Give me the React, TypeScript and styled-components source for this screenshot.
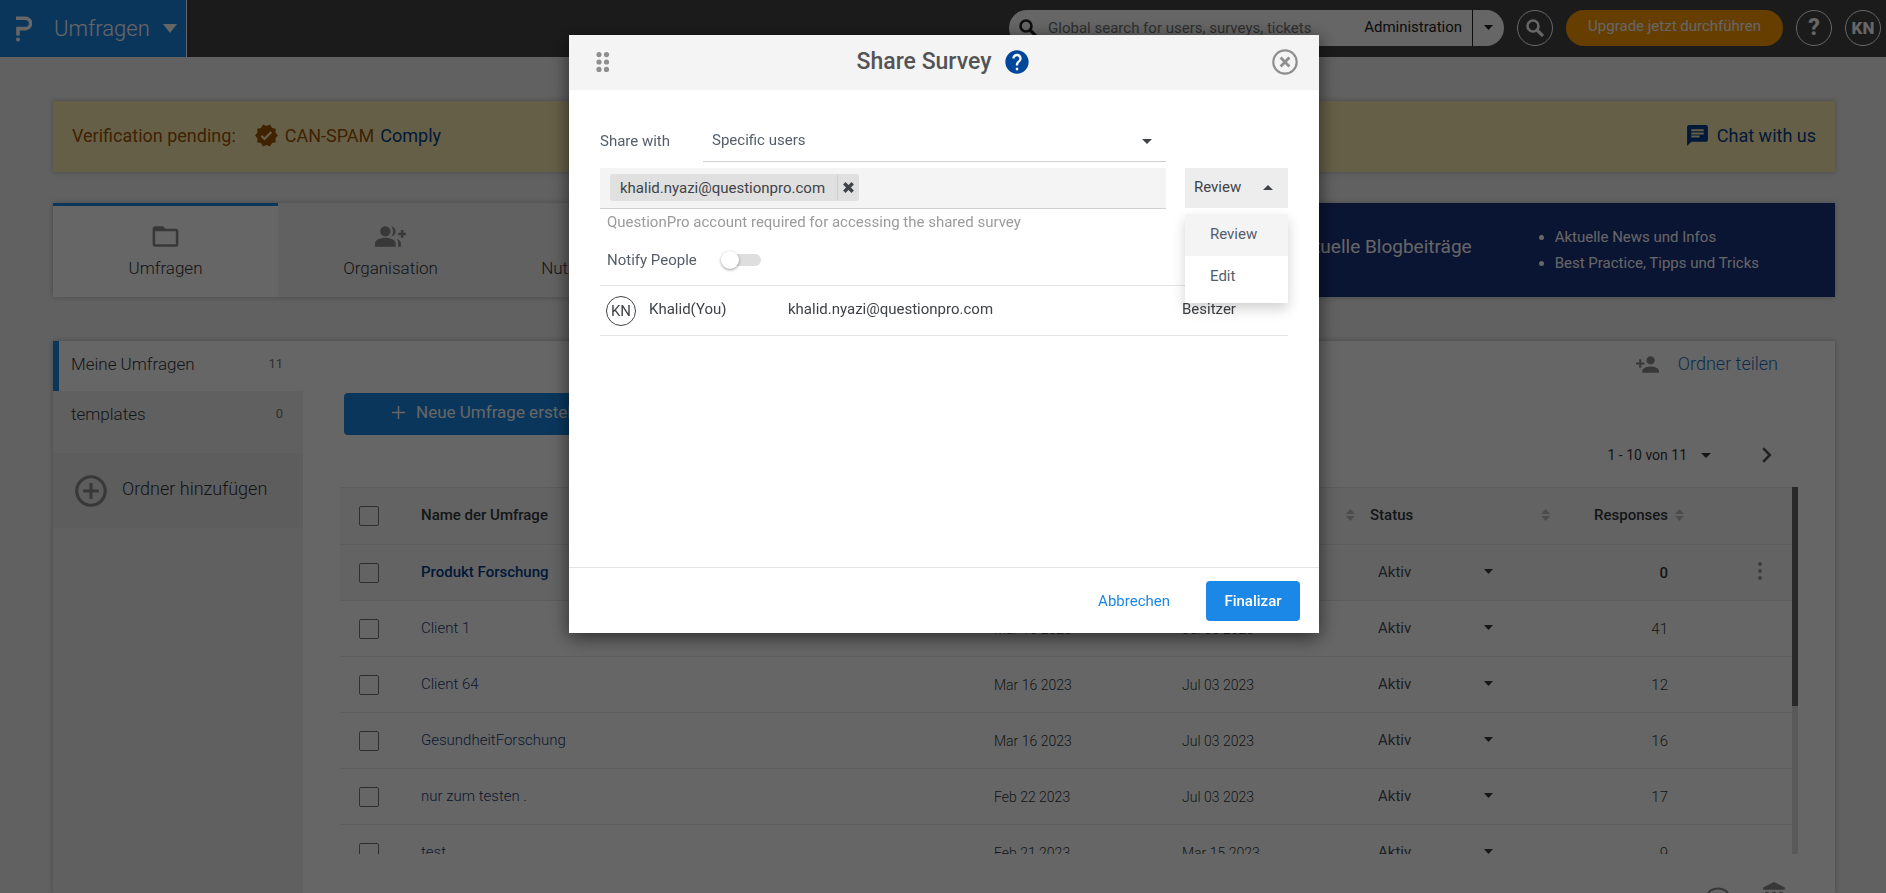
import React, { useState } from "react";
import styled, { createGlobalStyle } from "styled-components";
import {
  MdAccountBalance,
  MdAddCircleOutline,
  MdChat,
  MdFolderOpen,
  MdGroupAdd,
  MdHelp,
  MdPersonAdd,
  MdVerified,
} from "react-icons/md";

const FONT = '"Roboto", "Liberation Sans", sans-serif';

const GlobalStyle = createGlobalStyle`
  *, *::before, *::after { box-sizing: border-box; }
  html, body { height: 100%; }
  body {
    margin: 0;
    overflow: hidden;
    background: #f3f3f3;
    color: #33373c;
    font-family: ${FONT};
    font-size: 15px;
    line-height: 20px;
  }
  button, input, select { font: inherit; color: inherit; }
  button { padding: 0; border: 0; background: none; cursor: pointer; }
  a { text-decoration: none; }
  svg { display: block; flex: none; }
`;

/* ---------- page frame ---------- */

const Page = styled.div`
  display: flex;
  flex-direction: column;
  height: 100vh;
  overflow: hidden;
`;

const TopBar = styled.header`
  display: flex;
  flex: none;
  align-items: stretch;
  justify-content: space-between;
  height: 57px;
  background: #454545;
`;

const Brand = styled.button`
  display: flex;
  align-items: center;
  gap: 22px;
  padding: 0 9px 0 16px;
  border-right: 1px solid #fff;
  background: #1b87e6;
  color: #fff;
  font-size: 22px;
  font-weight: 300;
  line-height: 28px;
`;

const BrandName = styled.span`
  display: flex;
  align-items: center;
  gap: 13px;
`;

const TopTools = styled.div`
  display: flex;
  align-items: center;
  gap: 13px;
  padding: 0 5px 2px 0;
`;

const SearchPill = styled.form`
  display: flex;
  align-items: center;
  width: 495px;
  height: 36px;
  padding-left: 10px;
  border-radius: 18px;
  background: #fff;
  color: #222;
`;

const SearchInput = styled.input`
  flex: 1;
  min-width: 0;
  margin-left: 11px;
  padding: 0;
  border: 0;
  outline: 0;
  background: none;
  &::placeholder { color: #777; opacity: 1; }
`;

const ScopeButton = styled.button`
  padding: 0 10px 2px;
`;

const ScopeToggle = styled.button`
  display: flex;
  align-items: center;
  justify-content: center;
  align-self: stretch;
  width: 32px;
  border-left: 1px solid #222;
`;

const RoundButton = styled.button<{ $size?: number }>`
  display: flex;
  align-items: center;
  justify-content: center;
  width: 36px;
  height: 36px;
  border: 1px solid #fff;
  border-radius: 50%;
  color: #fff;
  font-size: ${(p) => p.$size ?? 18}px;
  font-weight: 800;
`;

const UpgradeButton = styled.button`
  height: 36px;
  padding: 0 22px 3px;
  border-radius: 18px;
  background: #ff9b00;
  color: #fff;
`;

const Content = styled.main`
  display: flex;
  flex: 1;
  flex-direction: column;
  min-height: 0;
  padding: 44px 51px 0 53px;
`;

/* ---------- notice ---------- */

const raised = "box-shadow: 0 0 6px rgba(0, 0, 0, 0.25);";

const Notice = styled.section`
  display: flex;
  flex: none;
  align-items: center;
  height: 71px;
  padding: 0 19px 2px;
  ${raised}
  background: #feeeb4;
  color: #a05400;
  font-size: 18px;
  line-height: 24px;
`;

const NoticeItem = styled.span`
  display: flex;
  align-items: center;
  gap: 6px;
  margin-left: 18px;
`;

const NoticeLink = styled.a`
  display: flex;
  align-items: center;
  gap: 7px;
  color: #00408f;
`;

const ChatLink = styled(NoticeLink)`
  margin-left: auto;
`;

/* ---------- tabs ---------- */

const TabStrip = styled.nav`
  display: flex;
  flex: none;
  height: 94px;
  margin-top: 31px;
  ${raised}
  background: #f3f3f3;
`;

const Tab = styled.a<{ $active?: boolean }>`
  display: flex;
  flex-direction: column;
  align-items: center;
  width: 225px;
  padding-top: 15px;
  border-top: ${(p) => (p.$active ? "3px solid #1b87e6" : "3px solid transparent")};
  background: ${(p) => (p.$active ? "#fff" : "transparent")};
  color: #8c8c8c;
  font-size: 17px;
  font-weight: 300;
  line-height: 24px;
`;

const TabLabel = styled.span`
  margin-top: 4px;
  color: #2f353c;
`;

const BlogCard = styled.aside`
  display: flex;
  flex: 1;
  align-items: center;
  justify-content: flex-end;
  gap: 62px;
  padding-right: 76px;
  background: #1b3380;
  color: #fff;
`;

const BlogTitle = styled.h2`
  margin: 0;
  padding-bottom: 6px;
  font-size: 19px;
  font-weight: 400;
  line-height: 24px;
`;

const BlogList = styled.ul`
  margin: 0;
  padding: 0 0 0 21px;
  line-height: 26px;
`;

/* ---------- workspace ---------- */

const Workspace = styled.section`
  display: flex;
  flex: 1;
  min-height: 0;
  margin-top: 44px;
  ${raised}
  background: #fff;
`;

const Sidebar = styled.nav`
  width: 250px;
  background: #f1f1f1;
`;

const Folder = styled.a<{ $active?: boolean }>`
  display: flex;
  align-items: center;
  justify-content: space-between;
  height: 50px;
  padding: 0 20px 4px 12px;
  border-left: 6px solid ${(p) => (p.$active ? "#1b87e6" : "transparent")};
  background: ${(p) => (p.$active ? "#fff" : "transparent")};
  color: #2f353c;
  font-size: 17px;
  font-weight: 300;
`;

const FolderCount = styled.span`
  font-size: 13px;
  font-weight: 400;
  color: #777;
`;

const AddFolder = styled.button`
  display: flex;
  align-items: center;
  gap: 12px;
  width: 100%;
  height: 75px;
  margin-top: 12px;
  padding: 0 0 0 19px;
  background: #e8e8e8;
  color: #8c8c8c;
  font-size: 18px;
  font-weight: 300;
`;

const AddFolderText = styled.span`
  padding-bottom: 3px;
  color: #2f353c;
`;

const Main = styled.div`
  flex: 1;
  min-width: 0;
  padding: 0 37px;
`;

const ShareRow = styled.div`
  display: flex;
  justify-content: flex-end;
  height: 52px;
  padding: 11px 20px 0 0;
`;

const ShareFolder = styled.button`
  display: flex;
  align-items: center;
  gap: 18px;
  height: 24px;
  color: #8c8c8c;
  font-size: 18px;
  font-weight: 300;
`;

const ShareFolderText = styled.span`
  color: #1b6fc2;
`;

const PrimaryButton = styled.button<{ $wide?: boolean }>`
  display: flex;
  align-items: center;
  justify-content: center;
  gap: 11px;
  height: ${(p) => (p.$wide ? 42 : 40)}px;
  width: ${(p) => (p.$wide ? "298px" : "94px")};
  margin-left: ${(p) => (p.$wide ? 4 : 0)}px;
  padding-bottom: ${(p) => (p.$wide ? 4 : 0)}px;
  border-radius: 4px;
  background: #1b87e6;
  color: #fff;
  font-size: ${(p) => (p.$wide ? 17 : 15)}px;
  font-weight: ${(p) => (p.$wide ? 400 : 500)};
`;

const Pager = styled.div`
  display: flex;
  align-items: center;
  justify-content: flex-end;
  height: 52px;
  padding: 0 26px 12px 0;
`;

const PagerRange = styled.button`
  display: flex;
  align-items: center;
  gap: 14px;
  margin-right: 51px;
  font-size: 14px;
`;

/* ---------- table ---------- */

const TableFrame = styled.div`
  display: flex;
  height: 367px;
`;

const TableClip = styled.div`
  flex: 1;
  overflow: hidden;
`;

const ScrollTrack = styled.div`
  width: 6px;
  background: #dedede;
`;

const ScrollThumb = styled.div`
  height: 219px;
  background: #666;
`;

const Table = styled.table`
  width: 100%;
  table-layout: fixed;
  border-collapse: collapse;
`;

const Col = styled.col<{ $w?: number }>`
  width: ${(p) => (p.$w ? `${p.$w}px` : "auto")};
`;

const Row = styled.tr<{ $tinted?: boolean }>`
  height: 56px;
  border-top: 1px solid #e6e6e6;
  background: ${(p) => (p.$tinted ? "#f8f8f8" : "transparent")};
`;

const HeadRow = styled(Row)`
  height: 57px;
`;

const Th = styled.th`
  padding: 0;
  font-weight: 500;
  text-align: left;
`;

const ThInner = styled.div<{ $end?: boolean }>`
  display: flex;
  align-items: center;
  justify-content: ${(p) => (p.$end ? "flex-end" : "space-between")};
  gap: 7px;
  padding-right: ${(p) => (p.$end ? 6 : 15)}px;
  padding-bottom: 2px;
`;

const Td = styled.td<{ $bold?: boolean }>`
  padding: 0;
  color: #33373c;
  font-size: 15px;
  font-weight: ${(p) => (p.$bold ? 500 : 300)};
`;

const LiftedTd = styled(Td)`
  padding-bottom: 2px;
`;

const DateTd = styled(Td)`
  font-size: 14px;
`;

const NumberTd = styled(Td)`
  padding-right: 22px;
  text-align: right;
`;

const SurveyLink = styled.a<{ $bold?: boolean }>`
  color: ${(p) => (p.$bold ? "#00408f" : "#1b3f7a")};
  font-weight: ${(p) => (p.$bold ? 500 : 300)};
`;

const Check = styled.input`
  display: block;
  appearance: none;
  width: 20px;
  height: 20px;
  margin: 0 0 0 19px;
  border: 1px solid #777;
  border-radius: 2px;
`;

const SelectBox = styled.div<{ $kind: "status" | "field" }>`
  display: grid;
  grid-template-columns: 1fr;
  align-items: center;
  width: ${(p) => (p.$kind === "status" ? "115px" : "auto")};
  margin-left: ${(p) => (p.$kind === "status" ? 8 : 0)}px;
  > * { grid-area: 1 / 1; }
  > svg { justify-self: end; pointer-events: none; margin-right: ${(p) => (p.$kind === "status" ? 0 : 14)}px; }
`;

const StatusSelect = styled.select`
  appearance: none;
  width: 100%;
  padding: 0;
  border: 0;
  background: none;
  color: #4a4f55;
  font-weight: 400;
`;

const MoreButton = styled.button`
  display: block;
  margin: 0 0 2px 68px;
  color: #999;
`;

const TableTools = styled.div`
  display: flex;
  justify-content: flex-end;
  gap: 32px;
  padding: 27px 11px 0 0;
  color: #8c8c8c;
`;

/* ---------- dialog ---------- */

const Overlay = styled.div`
  position: fixed;
  inset: 0;
  display: flex;
  align-items: flex-start;
  justify-content: center;
  padding: 35px 0 0 2px;
  background: rgba(0, 0, 0, 0.6);
`;

const Dialog = styled.section`
  display: flex;
  flex-direction: column;
  width: 750px;
  min-height: 598px;
  background: #fff;
  color: #3f4347;
  box-shadow: 0 4px 18px rgba(0, 0, 0, 0.6);
`;

const DialogHead = styled.header`
  display: grid;
  grid-template-columns: 1fr auto 1fr;
  align-items: center;
  height: 55px;
  padding: 0 21px 2px 27px;
  background: #f4f4f4;
`;

const DragHandle = styled.button`
  justify-self: start;
`;

const DialogTitle = styled.h1`
  display: flex;
  align-items: center;
  gap: 12px;
  margin: 0;
  padding-right: 6px;
  color: #545454;
  font-size: 23px;
  font-weight: 500;
  line-height: 28px;
`;

const HelpButton = styled.button`
  color: #00479b;
`;

const CloseButton = styled.button`
  justify-self: end;
`;

const DialogBody = styled.div`
  flex: 1;
  padding: 31px 31px 0;
`;

const FieldGrid = styled.div`
  display: grid;
  grid-template-columns: 103px 1fr 122px;
`;

const ShareLabel = styled.label`
  align-self: center;
  padding-bottom: 2px;
  color: #545e6b;
`;

const ShareSelect = styled.select`
  appearance: none;
  width: 100%;
  height: 41px;
  padding: 0 9px 3px;
  border: 0;
  border-bottom: 1px solid #cfcfcf;
  border-radius: 0;
  background: none;
  color: #545e6b;
`;

const PeopleRow = styled.div`
  display: flex;
  gap: 19px;
  margin-top: 6px;
`;

const PeopleBox = styled.div`
  display: flex;
  flex: 1;
  align-items: center;
  height: 41px;
  padding: 0 10px 1px;
  border-bottom: 1px solid #cfcfcf;
  background: #f4f4f4;
`;

const Chip = styled.span`
  display: flex;
  align-items: center;
  height: 27px;
  padding-left: 10px;
  border-radius: 3px;
  background: #e0e0e0;
`;

const ChipRemove = styled.button`
  display: flex;
  align-items: center;
  justify-content: center;
  width: 22px;
  height: 25px;
  margin-left: 12px;
  border-left: 1px solid #cdcdcd;
`;

const PeopleInput = styled.input`
  flex: 1;
  min-width: 0;
  border: 0;
  outline: 0;
  background: none;
`;

const RoleBox = styled.div`
  position: relative;
  width: 103px;
`;

const RoleButton = styled.button`
  display: flex;
  align-items: center;
  justify-content: space-between;
  width: 100%;
  height: 40px;
  padding: 0 15px 2px 9px;
  background: #ededed;
`;

const RoleMenu = styled.div`
  position: absolute;
  top: 46px;
  left: 0;
  width: 100%;
  padding-bottom: 5px;
  background: #fff;
  box-shadow: 0 6px 12px rgba(0, 0, 0, 0.18);
`;

const RoleOption = styled.button<{ $on: boolean }>`
  display: block;
  width: 100%;
  height: 42px;
  padding: 0 0 2px 25px;
  background: ${(p) => (p.$on ? "#f4f4f4" : "#fff")};
  color: #545e6b;
  text-align: left;
`;

const Hint = styled.p`
  margin: 3px 0 0;
  padding-left: 7px;
  color: #9b9b9b;
`;

const NotifyLabel = styled.label`
  display: inline-flex;
  align-items: center;
  gap: 24px;
  height: 20px;
  margin: 18px 0 15px 7px;
  color: #545e6b;
`;

const Toggle = styled.input`
  display: flex;
  align-items: center;
  appearance: none;
  width: 36px;
  height: 12px;
  margin: 0 0 0 4px;
  border-radius: 6px;
  background: #dedede;
  &::before {
    content: "";
    width: 18px;
    height: 18px;
    margin-left: ${(p) => (p.checked ? 18 : -4)}px;
    border-radius: 50%;
    background: #fff;
    box-shadow: 0 1px 3px rgba(0, 0, 0, 0.4);
  }
`;

const Member = styled.div`
  display: grid;
  grid-template-columns: 49px 139px 1fr 106px;
  align-items: center;
  height: 51px;
  border: 1px solid #e4e4e4;
  border-width: 1px 0;
`;

const MemberText = styled.span`
  padding-bottom: 4px;
`;

const Avatar = styled.span`
  display: flex;
  align-items: center;
  justify-content: center;
  width: 30px;
  height: 30px;
  margin-left: 6px;
  border: 1px solid #3f4347;
  border-radius: 50%;
`;

const DialogFoot = styled.footer`
  display: flex;
  align-items: center;
  justify-content: flex-end;
  gap: 36px;
  height: 66px;
  padding: 0 19px 0 0;
  border-top: 1px solid #e4e4e4;
`;

const TextButton = styled.button`
  color: #1b87e6;
`;

/* ---------- drawings ---------- */

const Caret = ({ up = false, w = 10, h = 5 }: { up?: boolean; w?: number; h?: number }) => (
  <svg width={w} height={h} viewBox="0 0 10 5" preserveAspectRatio="none" aria-hidden="true">
    <path d={up ? "M0 5 5 0l5 5z" : "M0 0h10L5 5z"} fill="currentColor" />
  </svg>
);

const Logo = () => (
  <svg width="16" height="26" viewBox="0 0 16 26" aria-hidden="true">
    <path d="M0 2.200h9.400a4.600 4.600 0 0 1 0 10.400H2v7" fill="none" stroke="#fff" strokeWidth="3.600" />
    <circle cx="2" cy="23.600" r="2" fill="#fff" />
  </svg>
);

const Magnifier = () => (
  <svg width="18" height="18" viewBox="0 0 18 18" fill="none" stroke="currentColor" aria-hidden="true">
    <circle cx="7" cy="7" r="5.500" strokeWidth="2.600" />
    <path d="m11 11 6 6" strokeWidth="3.200" />
  </svg>
);

const SortIcon = () => (
  <svg width="9" height="12" viewBox="0 0 9 12" fill="#bdbdbd" aria-hidden="true">
    <path d="M4.500 0 9 5H0zM0 7h9l-4.500 5z" />
  </svg>
);

const Dots = () => (
  <svg width="14" height="20" viewBox="0 0 14 20" fill="#8f8f8f" aria-hidden="true">
    {[2.6, 10, 17.4].map((y) => (
      <g key={y}>
        <circle cx="3" cy={y} r="2.600" />
        <circle cx="10.500" cy={y} r="2.600" />
      </g>
    ))}
  </svg>
);

const MoreIcon = () => (
  <svg width="4" height="18" viewBox="0 0 4 18" fill="currentColor" aria-hidden="true">
    <circle cx="2" cy="2" r="2" />
    <circle cx="2" cy="9" r="2" />
    <circle cx="2" cy="16" r="2" />
  </svg>
);

const CloseIcon = () => (
  <svg width="26" height="26" viewBox="0 0 26 26" fill="none" stroke="#8f8f8f" aria-hidden="true">
    <circle cx="13" cy="13" r="11.700" strokeWidth="2.200" />
    <path d="m8.600 8.600 8.800 8.800m0-8.800-8.800 8.800" strokeWidth="2.800" />
  </svg>
);

const RemoveIcon = () => (
  <svg width="11" height="11" viewBox="0 0 11 11" fill="none" stroke="#3f4347" strokeWidth="3.400" aria-hidden="true">
    <path d="m1.300 1.300 8.400 8.400m0-8.400-8.400 8.400" />
  </svg>
);

const PlusIcon = () => (
  <svg width="13" height="13" viewBox="0 0 13 13" stroke="currentColor" strokeWidth="1.500" aria-hidden="true">
    <path d="M6.500 0v13M0 6.500h13" />
  </svg>
);

const NextIcon = () => (
  <svg width="10" height="16" viewBox="0 0 10 16" fill="none" stroke="#555" strokeWidth="2.600" aria-hidden="true">
    <path d="m1.200 1.200 6.600 6.800-6.600 6.800" />
  </svg>
);

const OvalIcon = () => (
  <svg width="22" height="28" viewBox="0 0 22 28" fill="none" stroke="currentColor" strokeWidth="2" aria-hidden="true">
    <ellipse cx="11" cy="14" rx="10" ry="6.500" />
  </svg>
);

/* ---------- data ---------- */

interface Survey {
  name: string;
  created: string;
  modified: string;
  responses: number;
}

const surveys: Survey[] = [
  { name: "Produkt Forschung", created: "Mar 16 2023", modified: "Jul 03 2023", responses: 0 },
  { name: "Client 1", created: "Mar 16 2023", modified: "Jul 03 2023", responses: 41 },
  { name: "Client 64", created: "Mar 16 2023", modified: "Jul 03 2023", responses: 12 },
  { name: "GesundheitForschung", created: "Mar 16 2023", modified: "Jul 03 2023", responses: 16 },
  { name: "nur zum testen .", created: "Feb 22 2023", modified: "Jul 03 2023", responses: 17 },
  { name: "test", created: "Feb 21 2023", modified: "Mar 15 2023", responses: 9 },
];

const SurveyTable = () => (
  <TableFrame>
    <TableClip>
      <Table>
        <colgroup>
          <Col $w={81} />
          <Col />
          <Col $w={188} />
          <Col $w={188} />
          <Col $w={195} />
          <Col $w={125} />
          <Col $w={102} />
        </colgroup>
        <thead>
          <HeadRow $tinted>
            <Th>
              <Check type="checkbox" aria-label="Alle auswählen" />
            </Th>
            <Th>
              <ThInner>Name der Umfrage<SortIcon /></ThInner>
            </Th>
            <Th>
              <ThInner>Erstellt<SortIcon /></ThInner>
            </Th>
            <Th>
              <ThInner>Geändert<SortIcon /></ThInner>
            </Th>
            <Th>
              <ThInner>Status<SortIcon /></ThInner>
            </Th>
            <Th>
              <ThInner $end>Responses<SortIcon /></ThInner>
            </Th>
            <Th />
          </HeadRow>
        </thead>
        <tbody>
          {surveys.map((s, i) => (
            <Row key={s.name} $tinted={i === 0}>
              <Td>
                <Check type="checkbox" aria-label={s.name} />
              </Td>
              <LiftedTd>
                <SurveyLink href="#" $bold={i === 0}>{s.name}</SurveyLink>
              </LiftedTd>
              <DateTd>{s.created}</DateTd>
              <DateTd>{s.modified}</DateTd>
              <LiftedTd>
                <SelectBox $kind="status">
                  <StatusSelect aria-label={`Status ${s.name}`}>
                    <option>Aktiv</option>
                  </StatusSelect>
                  <Caret w={9} />
                </SelectBox>
              </LiftedTd>
              <NumberTd $bold={i === 0}>{s.responses}</NumberTd>
              <LiftedTd>
                {i === 0 && (
                  <MoreButton aria-label="Mehr">
                    <MoreIcon />
                  </MoreButton>
                )}
              </LiftedTd>
            </Row>
          ))}
        </tbody>
      </Table>
    </TableClip>
    <ScrollTrack>
      <ScrollThumb />
    </ScrollTrack>
  </TableFrame>
);

const ShareDialog = () => {
  const [role, setRole] = useState("Review");
  const [open, setOpen] = useState(true);
  const [notify, setNotify] = useState(false);
  return (
    <Overlay>
      <Dialog role="dialog" aria-labelledby="share-title">
        <DialogHead>
          <DragHandle aria-label="Verschieben"><Dots /></DragHandle>
          <DialogTitle>
            <span id="share-title">Share Survey</span>
            <HelpButton aria-label="Hilfe"><MdHelp size={28} /></HelpButton>
          </DialogTitle>
          <CloseButton aria-label="Schließen"><CloseIcon /></CloseButton>
        </DialogHead>
        <DialogBody>
          <FieldGrid>
            <ShareLabel htmlFor="share-with">Share with</ShareLabel>
            <SelectBox $kind="field">
              <ShareSelect id="share-with">
                <option>Specific users</option>
              </ShareSelect>
              <Caret />
            </SelectBox>
          </FieldGrid>
          <PeopleRow>
            <PeopleBox>
              <Chip>
                khalid.nyazi@questionpro.com
                <ChipRemove aria-label="Entfernen"><RemoveIcon /></ChipRemove>
              </Chip>
              <PeopleInput aria-label="E-Mail" />
            </PeopleBox>
            <RoleBox>
              <RoleButton aria-haspopup="listbox" aria-expanded={open} onClick={() => setOpen(!open)}>
                {role}
                <Caret up={open} />
              </RoleButton>
              {open && (
                <RoleMenu role="listbox">
                  {["Review", "Edit"].map((r) => (
                    <RoleOption key={r} role="option" aria-selected={r === role} $on={r === role} onClick={() => setRole(r)}>
                      {r}
                    </RoleOption>
                  ))}
                </RoleMenu>
              )}
            </RoleBox>
          </PeopleRow>
          <Hint>QuestionPro account required for accessing the shared survey</Hint>
          <NotifyLabel>
            Notify People
            <Toggle type="checkbox" checked={notify} onChange={(e) => setNotify(e.target.checked)} />
          </NotifyLabel>
          <Member>
            <Avatar>KN</Avatar>
            <MemberText>Khalid(You)</MemberText>
            <MemberText>khalid.nyazi@questionpro.com</MemberText>
            <MemberText>Besitzer</MemberText>
          </Member>
        </DialogBody>
        <DialogFoot>
          <TextButton>Abbrechen</TextButton>
          <PrimaryButton>Finalizar</PrimaryButton>
        </DialogFoot>
      </Dialog>
    </Overlay>
  );
};

export default function App() {
  return (
    <>
      <GlobalStyle />
      <Page>
        <TopBar>
          <Brand>
            <Logo />
            <BrandName>
              Umfragen
              <Caret w={14} h={9} />
            </BrandName>
          </Brand>
          <TopTools>
            <SearchPill>
              <Magnifier />
              <SearchInput aria-label="Suche" placeholder="Global search for users, surveys, tickets" />
              <ScopeButton type="button">Administration</ScopeButton>
              <ScopeToggle type="button" aria-label="Bereich wählen"><Caret w={9} /></ScopeToggle>
            </SearchPill>
            <RoundButton aria-label="Suchen"><Magnifier /></RoundButton>
            <UpgradeButton>Upgrade jetzt durchführen</UpgradeButton>
            <RoundButton $size={23}>?</RoundButton>
            <RoundButton $size={17}>KN</RoundButton>
          </TopTools>
        </TopBar>
        <Content>
          <Notice>
            Verification pending:
            <NoticeItem>
              <MdVerified size={25} />
              CAN-SPAM
              <NoticeLink href="#">Comply</NoticeLink>
            </NoticeItem>
            <ChatLink href="#">
              <MdChat size={25} />
              Chat with us
            </ChatLink>
          </Notice>
          <TabStrip>
            <Tab href="#" $active>
              <MdFolderOpen size={31} />
              <TabLabel>Umfragen</TabLabel>
            </Tab>
            <Tab href="#">
              <MdGroupAdd size={31} />
              <TabLabel>Organisation</TabLabel>
            </Tab>
            <Tab href="#">
              <MdGroupAdd size={31} />
              <TabLabel>Nutzungsstatistiken</TabLabel>
            </Tab>
            <BlogCard>
              <BlogTitle>Aktuelle Blogbeiträge</BlogTitle>
              <BlogList>
                <li>Aktuelle News und Infos</li>
                <li>Best Practice, Tipps und Tricks</li>
              </BlogList>
            </BlogCard>
          </TabStrip>
          <Workspace>
            <Sidebar>
              <Folder href="#" $active>
                Meine Umfragen<FolderCount>11</FolderCount>
              </Folder>
              <Folder href="#">
                templates<FolderCount>0</FolderCount>
              </Folder>
              <AddFolder>
                <MdAddCircleOutline size={38} />
                <AddFolderText>Ordner hinzufügen</AddFolderText>
              </AddFolder>
            </Sidebar>
            <Main>
              <ShareRow>
                <ShareFolder>
                  <MdPersonAdd size={25} />
                  <ShareFolderText>Ordner teilen</ShareFolderText>
                </ShareFolder>
              </ShareRow>
              <PrimaryButton $wide>
                <PlusIcon />
                Neue Umfrage erstellen
              </PrimaryButton>
              <Pager>
                <PagerRange>
                  1 - 10 von 11
                  <Caret />
                </PagerRange>
                <button aria-label="Weiter"><NextIcon /></button>
              </Pager>
              <SurveyTable />
              <TableTools>
                <OvalIcon />
                <MdAccountBalance size={26} />
              </TableTools>
            </Main>
          </Workspace>
        </Content>
      </Page>
      <ShareDialog />
    </>
  );
}
